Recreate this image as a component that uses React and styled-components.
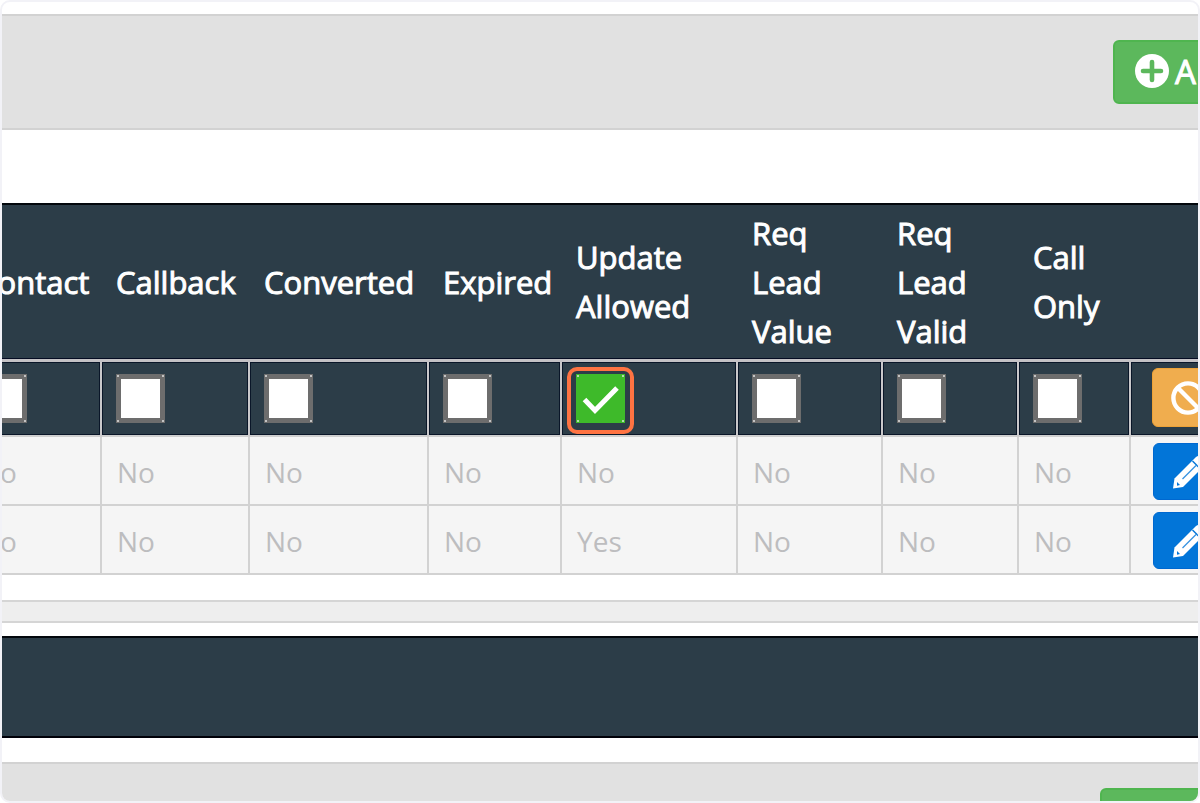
import React from "react";
import styled, { createGlobalStyle } from "styled-components";

const GlobalStyle = createGlobalStyle`
  *, *::before, *::after { box-sizing: border-box; }
  body {
    margin: 0;
    background: #fff;
    font-family: "Open Sans", "Noto Sans", sans-serif;
  }
`;

const Frame = styled.main`
  display: flex;
  flex-direction: column;
  width: 100%;
  height: 100vh;
  overflow: hidden;
  border: 2px solid #f2f2f7;
  border-radius: 10px;
  background: #fff;
`;

const ActionBar = styled.header`
  display: flex;
  flex: none;
  justify-content: flex-end;
  margin-top: ${(p) => p.$gap}px;
  padding: 24px 0;
  border-top: 2px solid #d2d2d2;
  border-bottom: 2px solid #d2d2d2;
  background: #e1e1e1;
`;

const AddButton = styled.button`
  display: flex;
  flex: none;
  align-items: center;
  gap: 6px;
  width: ${(p) => p.$width}px;
  height: 64px;
  margin-right: -75px;
  padding: 0 0 2px 20px;
  border: 2px solid #4fb54f;
  border-radius: 6px;
  background: #5cb85c;
  color: #fff;
  font: 400 33px "Open Sans", sans-serif;
  -webkit-text-stroke: 1px #fff;
`;

const Icon = styled.svg`
  display: block;
  flex: none;
  width: 34px;
  height: 34px;
`;

const TableArea = styled.section`
  flex: none;
  margin-top: 73px;
`;

const Table = styled.table`
  width: calc(100% + 137px);
  margin-left: -38px;
  border-collapse: separate;
  border-spacing: 0;
  table-layout: fixed;
`;

const HeadCell = styled.th`
  height: 159px;
  padding: 0 0 0 14px;
  border-top: 2px solid #03080d;
  border-bottom: 3px solid #c4c2c5;
  box-shadow: inset 0 -1px #050c22;
  background: #2c3d48;
  color: #fff;
  -webkit-text-stroke: 1px #fff;
  font-size: 31px;
  font-weight: 400;
  line-height: 49px;
  text-align: left;
  vertical-align: middle;
`;

const EditCell = styled.td`
  height: 75px;
  padding: 0 ${(p) => (p.$action ? 21 : 14)}px;
  border-right: 2px solid #c9c8ca;
  border-bottom: 2px solid #cfcfcf;
  box-shadow: inset 0 0 0 1px #0a1628;
  background: #2c3d48;
`;

const Cell = styled.td`
  height: 69px;
  padding: 2px ${(p) => (p.$action ? 22 : 15)}px 0;
  border-right: 2px solid #d2d2d2;
  border-bottom: 2px solid #d2d2d2;
  background: #f5f5f5;
  color: #bdbdbf;
  font-size: 28px;
  line-height: 40px;
`;

const Tick = styled.label`
  position: relative;
  display: block;
  width: 49px;
  height: 49px;
`;

const TickBox = styled.input`
  appearance: none;
  display: block;
  width: 49px;
  height: 49px;
  margin: 0;
  background:
    linear-gradient(#c4c4c4, #c4c4c4) 1px 1px / 2px 2px,
    linear-gradient(#c4c4c4, #c4c4c4) 46px 1px / 2px 2px,
    linear-gradient(#c4c4c4, #c4c4c4) 1px 46px / 2px 2px,
    linear-gradient(#c4c4c4, #c4c4c4) 46px 46px / 2px 2px,
    linear-gradient(#fff, #fff) 5px 5px / 39px 39px,
    #6d6d6d;
  background-repeat: no-repeat;

  &:checked {
    background:
      linear-gradient(#b4dcae, #b4dcae) 1px 1px / 2px 2px,
      linear-gradient(#b4dcae, #b4dcae) 46px 1px / 2px 2px,
      linear-gradient(#b4dcae, #b4dcae) 1px 46px / 2px 2px,
      linear-gradient(#b4dcae, #b4dcae) 46px 46px / 2px 2px,
      #3eba2a;
    background-repeat: no-repeat;
  }

  & + svg { display: none; }
  &:checked + svg { display: block; }
`;

const TickMark = styled.svg`
  position: absolute;
  inset: 0;
  width: 49px;
  height: 49px;
  pointer-events: none;
`;

const Highlight = styled.span`
  position: absolute;
  inset: -7px -9px -11px -9px;
  border: 4px solid #ff7342;
  border-radius: 10px;
  pointer-events: none;
`;

const RowButton = styled.button`
  display: flex;
  align-items: center;
  width: 76px;
  height: ${(p) => (p.$cancel ? 59 : 57)}px;
  margin-top: ${(p) => (p.$cancel ? -2 : 0)}px;
  padding: 0 18px;
  border: 1px solid ${(p) => (p.$cancel ? "#eea236" : "#0068d0")};
  border-radius: 6px;
  background: ${(p) => (p.$cancel ? "#f0ad4e" : "#0275d8")};
  color: #fff;
`;

const ScrollTrack = styled.div`
  flex: none;
  height: 23px;
  margin-top: 25px;
  border-top: 2px solid #d5d5d5;
  border-bottom: 2px solid #d5d5d5;
  background: #eee;
`;

const Band = styled.div`
  flex: none;
  height: 102px;
  margin-top: 13px;
  border-top: 2px solid #03080d;
  border-bottom: 2px solid #000008;
  background: #2c3d48;
`;

const PlusCircle = () => (
  <Icon viewBox="0 0 34 34" fill="none" aria-hidden="true">
    <circle cx="17" cy="17" r="17" fill="#fff" />
    <path d="M17 8v18M8 17h18" stroke="#5cb85c" strokeWidth="4.6" strokeLinecap="round" />
  </Icon>
);

const Ban = () => (
  <Icon viewBox="0 0 34 34" fill="none" stroke="currentColor" strokeWidth="4.4" aria-hidden="true">
    <circle cx="17" cy="17" r="14.6" />
    <path d="M7 7l20 20" />
  </Icon>
);

const Pencil = () => (
  <Icon viewBox="0 0 34 34" fill="none" aria-hidden="true">
    <path d="M1 33.500L2.500 23.500 23.500 2.500Q27 -.5 30 2.500L32.500 5Q35 8 32 11L11 32Z" fill="#fff" />
    <path d="M10.500 24L24 10.500" stroke="#0275d8" strokeWidth="1.200" opacity=".8" />
    <path d="M20.500 6l8 8" stroke="#0275d8" strokeWidth="1.400" />
    <path d="M5 27l3 3-3 .8z" fill="#0275d8" />
  </Icon>
);

const columns = [
  { title: "Contact", width: 138 },
  { title: "Callback", width: 148 },
  { title: "Converted", width: 179 },
  { title: "Expired", width: 133 },
  { title: "Update Allowed", width: 176, on: true },
  { title: "Req Lead Value", width: 145, narrow: true },
  { title: "Req Lead Valid", width: 136, narrow: true },
  { title: "Call Only", width: 112, narrow: true },
];

const rows = [
  ["No", "No", "No", "No", "No", "No", "No", "No"],
  ["No", "No", "No", "No", "Yes", "No", "No", "No"],
];

const Column = styled.col`
  width: ${(p) => p.$width}px;
`;

const HeadText = styled.span`
  display: block;
  max-width: ${(p) => (p.$narrow ? "100px" : "none")};
`;

export default function App() {
  return (
    <>
      <GlobalStyle />
      <Frame>
        <ActionBar $gap={12}>
          <AddButton type="button" $width={160}>
            <PlusCircle />
            A
          </AddButton>
        </ActionBar>

        <TableArea>
          <Table>
            <colgroup>
              {columns.map((c) => (
                <Column key={c.title} $width={c.width} />
              ))}
              <col />
            </colgroup>
            <thead>
              <tr>
                {columns.map((c) => (
                  <HeadCell key={c.title} scope="col">
                    <HeadText $narrow={c.narrow}>{c.title}</HeadText>
                  </HeadCell>
                ))}
                <HeadCell as="td" />
              </tr>
            </thead>
            <tbody>
              <tr>
                {columns.map((c) => (
                  <EditCell key={c.title}>
                    <Tick>
                      <TickBox type="checkbox" defaultChecked={c.on} aria-label={c.title} />
                      <TickMark viewBox="0 0 49 49" fill="none" stroke="#fff" strokeWidth="5" aria-hidden="true">
                        <path d="M8.500 25.500l10.500 11L41 14" />
                      </TickMark>
                      {c.on && <Highlight />}
                    </Tick>
                  </EditCell>
                ))}
                <EditCell $action>
                  <RowButton type="button" $cancel aria-label="Cancel">
                    <Ban />
                  </RowButton>
                </EditCell>
              </tr>
              {rows.map((row, r) => (
                <tr key={r}>
                  {row.map((value, i) => (
                    <Cell key={i}>{value}</Cell>
                  ))}
                  <Cell $action>
                    <RowButton type="button" aria-label="Edit">
                      <Pencil />
                    </RowButton>
                  </Cell>
                </tr>
              ))}
            </tbody>
          </Table>
        </TableArea>

        <ScrollTrack />
        <Band />

        <ActionBar as="footer" $gap={24}>
          <AddButton type="button" $width={173} aria-label="Add" />
        </ActionBar>
      </Frame>
    </>
  );
}
